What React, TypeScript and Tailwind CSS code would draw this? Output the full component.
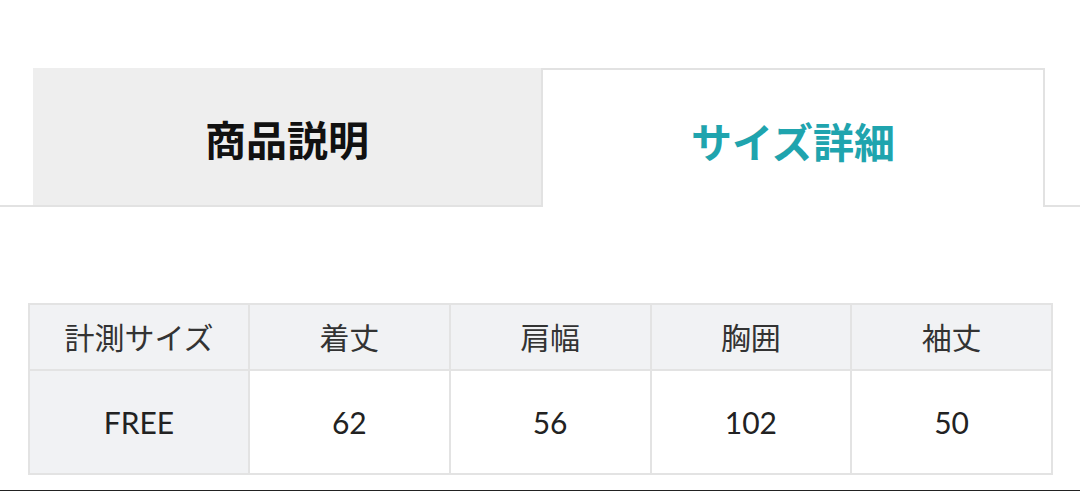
const headers = ['計測サイズ', '着丈', '肩幅', '胸囲', '袖丈'];
const values = ['FREE', '62', '56', '102', '50'];

export default function App() {
  return (
    <div className="w-[1080px] h-[491px] bg-white overflow-hidden font-['Lato','Noto_Sans_CJK_JP',sans-serif] text-[#222]">
      <div className="h-[68px]" />
      <div className="flex h-[139px]">
        <div className="w-[33px] border-b-2 border-[#e2e2e2]" />
        <div className="w-[508px] flex items-center justify-center bg-[#eeeeee] border-b-2 border-[#e2e2e2]">
          <span className="text-[41px] font-bold text-[#111] pt-[8px]">商品説明</span>
        </div>
        <div className="w-[504px] flex items-center justify-center bg-white border-t-2 border-x-2 border-[#e2e2e2]">
          <span className="text-[41px] font-bold text-[#1fa4ae] pt-[8px]">サイズ詳細</span>
        </div>
        <div className="flex-1 border-b-2 border-[#e2e2e2]" />
      </div>
      <div className="h-[96px]" />
      <table className="ml-[28px] w-[1025px] border-collapse border-2 border-[#e3e3e3] table-fixed">
        <colgroup>
          <col className="w-[220px]" />
          <col />
          <col />
          <col />
          <col />
        </colgroup>
        <thead>
          <tr className="h-[66px] bg-[#f1f2f4]">
            {headers.map((h) => (
              <th key={h} className="border-2 border-[#e3e3e3] text-[30px] font-normal text-[#333] text-center">
                {h}
              </th>
            ))}
          </tr>
        </thead>
        <tbody>
          <tr className="h-[104px]">
            {values.map((v, i) => (
              <td
                key={i}
                className={`border-2 border-[#e3e3e3] text-[30px] text-[#222] text-center ${i === 0 ? 'bg-[#f1f2f4]' : 'bg-white'}`}
              >
                {v}
              </td>
            ))}
          </tr>
        </tbody>
      </table>
      <div className="mt-[15px] h-[3px] bg-[#222]" />
    </div>
  );
}
